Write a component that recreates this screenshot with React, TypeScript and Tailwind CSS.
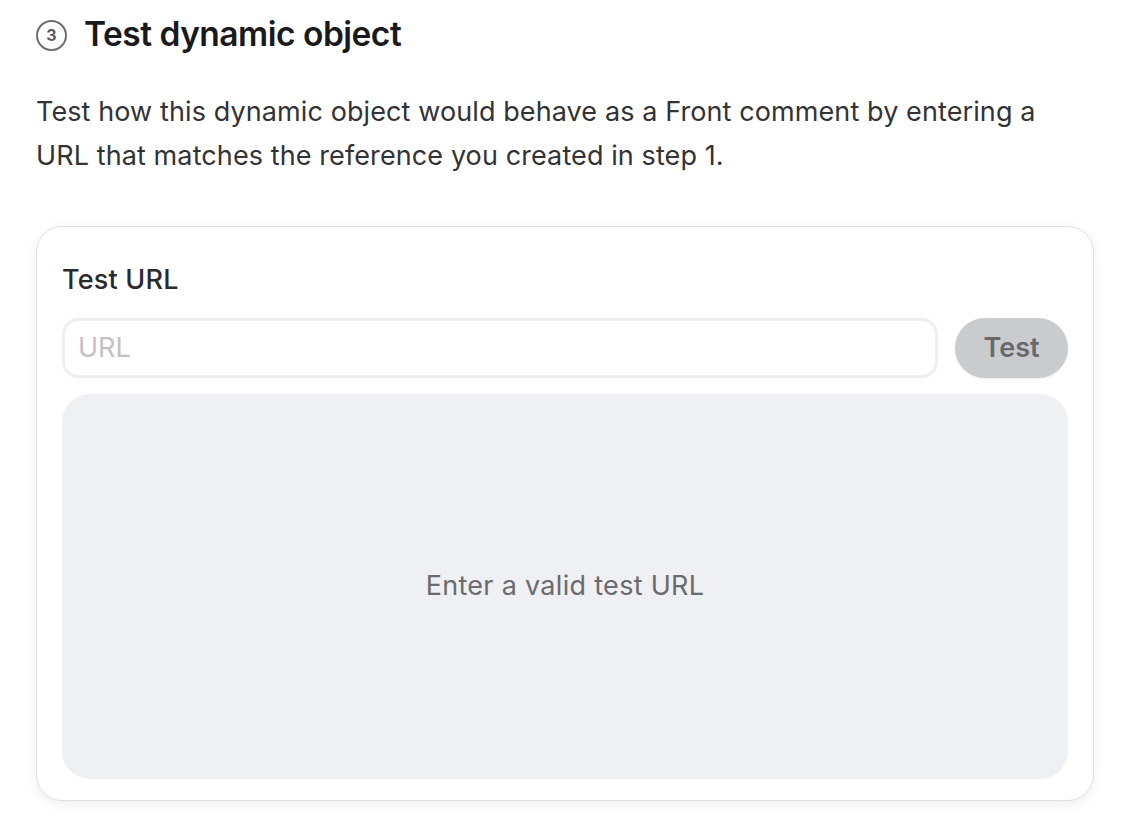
import React from 'react';

export default function App() {
  return (
    <div className="w-[1140px] h-[820px] bg-white font-['Inter',sans-serif] pl-9 pt-4 pr-[46px]">
      <div className="flex items-center gap-[17px] h-[38px]">
        <div className="w-[31px] h-[31px] rounded-full border-2 border-[#6e6e70] flex items-center justify-center text-[16px] font-bold text-[#5a5a5c] leading-none">3</div>
        <h2 className="text-[33.5px] font-semibold text-[#1a1a1c] tracking-[-0.5px] leading-none">Test dynamic object</h2>
      </div>
      <p className="mt-[36px] text-[27px] tracking-[0.1px] leading-[44px] text-[#333335] w-[1040px]">
        Test how this dynamic object would behave as a Front comment by entering a URL that matches the reference you created in step 1.
      </p>
      <div className="mt-[48px] w-[1058px] h-[575px] rounded-[26px] border border-[#e0e0e2] shadow-[0_3px_12px_rgba(0,0,0,0.07)] px-[25px] pt-[36px] pb-[21px] flex flex-col">
        <div className="text-[27px] tracking-[0.2px] font-medium text-[#2a2a2c] leading-[34px]">Test URL</div>
        <div className="mt-[21px] flex gap-[17px] items-center">
          <div className="flex-1 h-[60px] rounded-[16px] border-[3px] border-[#eeeff2] flex items-center px-[13px] text-[27px] text-[#c2c2c4]">URL</div>
          <button className="w-[113px] h-[60px] rounded-full bg-[#c9cbce] text-[27px] font-semibold text-[#69696c] shadow-[0_1px_2px_rgba(0,0,0,0.08)]">Test</button>
        </div>
        <div className="mt-[16px] flex-1 rounded-[28px] bg-[#eff0f3] flex items-center justify-center text-[27px] tracking-[0.3px] text-[#6b6b6e]">
          Enter a valid test URL
        </div>
      </div>
    </div>
  );
}
